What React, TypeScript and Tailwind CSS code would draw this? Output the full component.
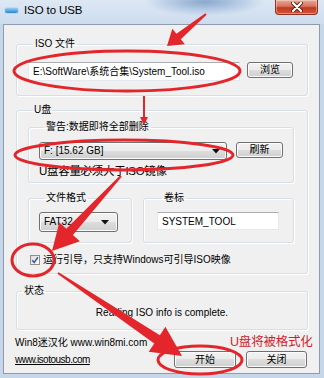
import React from 'react';

type Pt = [number, number];

const RED = '#e3262b';

// tapered "hand drawn" arrow: thin tail, wider shaft near the head, big head
function arrowPoints(tail: Pt, tip: Pt, tailW: number, shaftW: number, headW: number, headL: number) {
  const dx = tip[0] - tail[0];
  const dy = tip[1] - tail[1];
  const len = Math.hypot(dx, dy);
  const ux = dx / len;
  const uy = dy / len;
  const nx = -uy;
  const ny = ux;
  const bx = tip[0] - ux * headL;
  const by = tip[1] - uy * headL;
  const p = (x: number, y: number, w: number, s: number) =>
    `${(x + (nx * w * s) / 2).toFixed(1)},${(y + (ny * w * s) / 2).toFixed(1)}`;
  return [
    p(tail[0], tail[1], tailW, 1),
    p(bx, by, shaftW, 1),
    p(bx, by, headW, 1),
    `${tip[0]},${tip[1]}`,
    p(bx, by, headW, -1),
    p(bx, by, shaftW, -1),
    p(tail[0], tail[1], tailW, -1),
  ].join(' ');
}

const btn =
  'flex items-center justify-center rounded-[3px] border border-[#707070] bg-[linear-gradient(#f2f2f2_0%,#ebebeb_50%,#dddddd_50%,#cfcfcf_100%)] shadow-[inset_0_0_0_1px_#fbfbfb] leading-none';

const group = 'rounded-[3px] border border-[#d5dfe5] shadow-[inset_1px_1px_0_#ffffff,1px_1px_0_#ffffff]';

function DropArrow() {
  return (
    <svg width="8" height="5" viewBox="0 0 8 5">
      <path d="M0 0 H8 L4 4.5 Z" fill="#111" />
    </svg>
  );
}

export default function App() {
  return (
    <div className="relative h-[378px] w-[324px] overflow-hidden bg-[#c7d7ea] font-['Liberation_Sans','Noto_Sans_CJK_SC',sans-serif] text-[10px] text-black">
      {/* title bar */}
      <div className="flex h-[24px] items-start bg-[radial-gradient(ellipse_60px_14px_at_205px_2px,#8aa8cc_0%,#b9cde6_60%,transparent_100%),linear-gradient(#dde8f4,#cddcee)]">
        <div className="flex items-center gap-[6px] pl-[5px] pt-[3px]">
          <span className="mt-[1px] h-[5px] w-[13px] rounded-full bg-[linear-gradient(#8fd0f5,#2a86cf)] shadow-[0_0_1px_#1d5f9c]" />
          <span className="text-[11.5px] leading-[14px] tracking-[-0.1px]">ISO to USB</span>
        </div>
        <div className="ml-auto mr-[6px] flex h-[15px] w-[43px] items-center justify-center rounded-b-[4px] border border-t-0 border-[#8b3324] bg-[linear-gradient(#e9a896_0%,#d8735c_45%,#c2391f_55%,#d2573a_100%)] shadow-[inset_0_0_0_1px_rgba(255,255,255,0.35)]">
          <svg width="12" height="10" viewBox="0 0 12 10">
            <path d="M2 1 L10 9 M10 1 L2 9" stroke="#5a1a10" strokeWidth="4" strokeLinecap="round" />
            <path d="M2 1 L10 9 M10 1 L2 9" stroke="#ffffff" strokeWidth="2.3" strokeLinecap="round" />
          </svg>
        </div>
      </div>

      {/* client area */}
      <div className="ml-[3px] mr-[4px] h-[350px] border border-[#8d9bad] bg-[#f0f0f0] pl-[12px] pr-[11px] pt-[13px]">
        <fieldset className={`${group} px-[11px] pb-[14px] pt-[12px]`}>
          <legend className="ml-[5px] px-[2px] leading-[12px]">ISO 文件</legend>
          <div className="flex items-start">
            <div className="flex h-[19px] w-[212px] items-center border border-[#e3e9ef] border-t-[#abadb3] bg-white pl-[4px]">
              E:\SoftWare\系统合集\System_Tool.iso
            </div>
            <div className={`${btn} ml-[7px] h-[16px] w-[46px]`}>浏览</div>
          </div>
        </fieldset>

        <fieldset className={`${group} mt-[8px] pb-[7px] pl-[11px] pr-[13px] pt-[5px]`}>
          <legend className="ml-[5px] px-[1px] leading-[12px]">U盘</legend>

          <fieldset className={`${group} pb-[2px] pl-[10px] pr-[9px] pt-[9px]`}>
            <legend className="ml-[5px] px-[2px] leading-[12px]">警告:数据即将全部删除</legend>
            <div className="flex items-start">
              <div className={`${btn} h-[18px] w-[188px] !justify-between pl-[4px] pr-[6px]`}>
                <span>F: [15.62 GB]</span>
                <DropArrow />
              </div>
              <div className={`${btn} ml-[9px] h-[16px] w-[47px]`}>刷新</div>
            </div>
            <div className="mt-[3px] pl-[-1px] text-[11.5px] leading-[17px] tracking-[-0.3px]">U盘容量必须大于ISO镜像</div>
          </fieldset>

          <div className="mt-[9px] flex gap-[11px]">
            <fieldset className={`${group} w-[104px] pb-[10px] pl-[10px] pt-[8px]`}>
              <legend className="ml-[5px] px-[2px] leading-[12px]">文件格式</legend>
              <div className={`${btn} h-[20px] w-[79px] !justify-between pl-[4px] pr-[8px]`}>
                <span>FAT32</span>
                <DropArrow />
              </div>
            </fieldset>
            <fieldset className={`${group} flex-1 pb-[10px] pl-[13px] pt-[8px]`}>
              <legend className="ml-[5px] px-[2px] leading-[12px]">卷标</legend>
              <div className="flex h-[18px] w-[122px] items-center border border-[#e3e9ef] border-t-[#abadb3] bg-white pl-[4px]">
                SYSTEM_TOOL
              </div>
            </fieldset>
          </div>

          <div className="mt-[11px] flex h-[12px] items-center gap-[3px] pl-[2px]">
            <span className="flex h-[10px] w-[10px] items-center justify-center border border-[#8e8f8f] bg-[linear-gradient(135deg,#dcdcdc,#ffffff)]">
              <svg width="8" height="8" viewBox="0 0 8 8">
                <path d="M1.2 4.2 L3.2 6.4 L6.9 1.2" fill="none" stroke="#4a5f97" strokeWidth="1.6" />
              </svg>
            </span>
            <span className="leading-[12px]">运行引导，只支持Windows可引导ISO映像</span>
          </div>
        </fieldset>

        <fieldset className={`${group} mt-[11px] pb-[10px] pt-[10px]`}>
          <legend className="ml-[5px] px-[2px] leading-[12px]">状态</legend>
          <div className="text-center leading-[12px]">Reading ISO info is complete.</div>
        </fieldset>

        <div className="flex items-start justify-between pr-[1px]">
          <div className="-ml-[1px] pt-[6px]">
            <div className="text-[10px] leading-[13px]">Win8迷汉化 www.win8mi.com</div>
            <div className="mt-[4px] text-[10px] leading-[13px] tracking-[-0.5px] underline">www.isotousb.com</div>
          </div>
          <div className="flex gap-[10px] pt-[21px]">
            <div className={`${btn} h-[17px] w-[62px]`}>开始</div>
            <div className={`${btn} h-[17px] w-[61px]`}>关闭</div>
          </div>
        </div>
      </div>

      {/* red annotations drawn over the screenshot */}
      <svg className="pointer-events-none absolute left-0 top-0" width="324" height="378" viewBox="0 0 324 378">
        <g fill={RED}>
          <polygon points={arrowPoints([206, 14], [167, 46], 2, 7, 20, 15)} />
          <polygon points={arrowPoints([144, 96], [144, 125], 2, 2, 8, 8)} />
          <polygon points={arrowPoints([121, 176], [52, 251], 2, 9, 28, 26)} />
          <polygon points={arrowPoints([58, 273], [182, 356], 2, 10, 30, 30)} />
        </g>
        <g fill="none" stroke={RED} strokeWidth="3">
          <ellipse cx="127" cy="71" rx="113" ry="20" />
          <ellipse cx="124" cy="155" rx="109" ry="15" />
          <ellipse cx="33" cy="260" rx="21" ry="16" />
          <ellipse cx="200" cy="360" rx="42" ry="14" />
        </g>
      </svg>
      <div className="pointer-events-none absolute left-[230px] top-[334px] text-[12.5px] leading-[16px] tracking-[-0.2px] text-[#d0202a]">
        U盘将被格式化
      </div>
    </div>
  );
}
